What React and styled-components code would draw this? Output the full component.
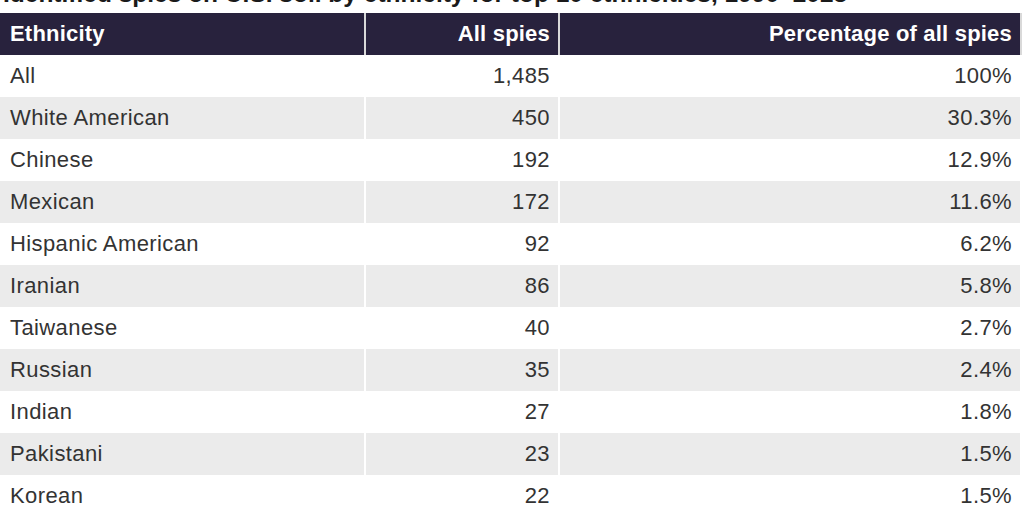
import React from 'react';
import styled, { createGlobalStyle } from 'styled-components';

const GlobalStyle = createGlobalStyle`
  html, body {
    margin: 0;
    padding: 0;
    background: #fff;
    overflow: hidden;
  }
  body {
    font-family: "Liberation Sans", Arial, sans-serif;
    color: #333;
  }
`;

const Page = styled.div`
  width: 1024px;
  height: 512px;
  overflow: hidden;
`;

const Title = styled.div`
  margin-top: -18px;
  height: 31px;
  padding-left: 3px;
  font-size: 24.5px;
  font-weight: 700;
  line-height: 24px;
  color: #1a1a1a;
  white-space: nowrap;
`;

const Table = styled.div`
  display: grid;
  grid-template-columns: 364px 192px 460px;
  column-gap: 2px;
`;

const Cell = styled.div`
  height: 42px;
  display: flex;
  align-items: center;
  justify-content: ${(p) => (p.$num ? 'flex-end' : 'flex-start')};
  padding: 0 ${(p) => (p.$num ? '8px' : '10px')};
  font-size: 22px;
  letter-spacing: 0.4px;
  background: ${(p) => (p.$alt ? '#ebebeb' : '#fff')};
  color: #333;
  white-space: nowrap;
`;

const HeadCell = styled(Cell)`
  background: #28223d;
  color: #fff;
  font-weight: 700;
  font-size: 22px;
  letter-spacing: 0.2px;
  box-shadow: 2px 0 0 #d9d9d9;
`;

const rows = [
  ['All', '1,485', '100%'],
  ['White American', '450', '30.3%'],
  ['Chinese', '192', '12.9%'],
  ['Mexican', '172', '11.6%'],
  ['Hispanic American', '92', '6.2%'],
  ['Iranian', '86', '5.8%'],
  ['Taiwanese', '40', '2.7%'],
  ['Russian', '35', '2.4%'],
  ['Indian', '27', '1.8%'],
  ['Pakistani', '23', '1.5%'],
  ['Korean', '22', '1.5%'],
];

const App = () => (
  <Page>
    <GlobalStyle />
    <Title>Identified spies on U.S. soil by ethnicity for top 10 ethnicities, 1990–2023</Title>
    <Table>
      <HeadCell>Ethnicity</HeadCell>
      <HeadCell $num>All spies</HeadCell>
      <HeadCell $num>Percentage of all spies</HeadCell>
      {rows.map(([name, count, pct], i) => (
        <React.Fragment key={name}>
          <Cell $alt={i % 2 === 1}>{name}</Cell>
          <Cell $alt={i % 2 === 1} $num>{count}</Cell>
          <Cell $alt={i % 2 === 1} $num>{pct}</Cell>
        </React.Fragment>
      ))}
    </Table>
  </Page>
);

export default App;
